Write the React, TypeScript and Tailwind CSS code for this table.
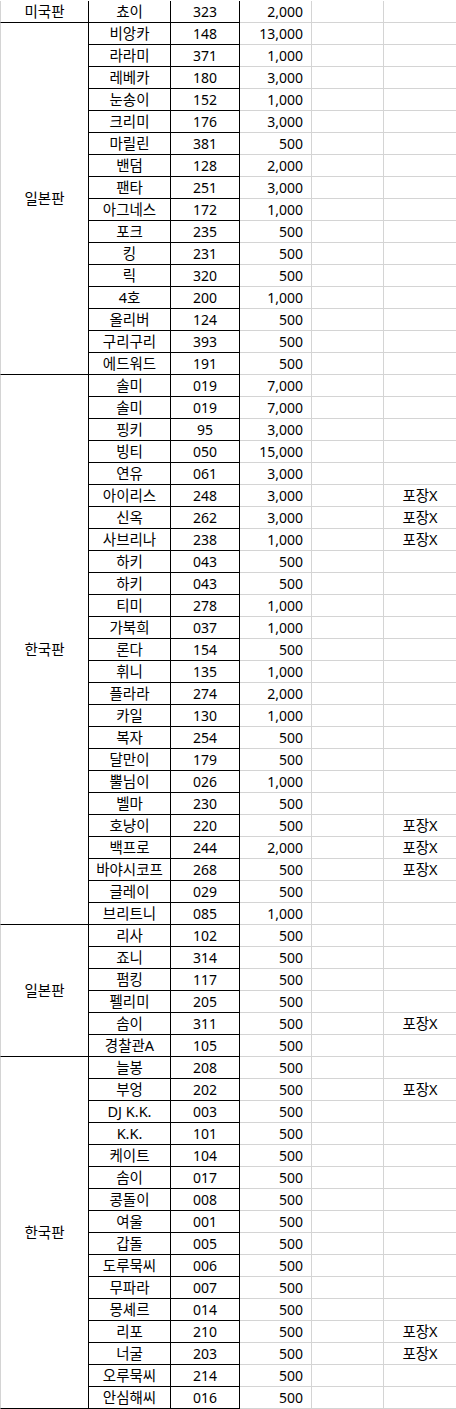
import React from 'react';

type Row = { name: string; no: string; price: string; note?: string };
type Group = { label: string; span: string; rows: Row[] };

const r = (name: string, no: string, price: string, note?: string): Row => ({ name, no, price, note });

const groups: Group[] = [
  { label: '미국판', span: 'row-span-1', rows: [r('쵸이', '323', '2,000')] },
  {
    label: '일본판',
    span: 'row-span-16',
    rows: [
      r('비앙카', '148', '13,000'),
      r('라라미', '371', '1,000'),
      r('레베카', '180', '3,000'),
      r('눈송이', '152', '1,000'),
      r('크리미', '176', '3,000'),
      r('마릴린', '381', '500'),
      r('밴덤', '128', '2,000'),
      r('팬타', '251', '3,000'),
      r('아그네스', '172', '1,000'),
      r('포크', '235', '500'),
      r('킹', '231', '500'),
      r('릭', '320', '500'),
      r('4호', '200', '1,000'),
      r('올리버', '124', '500'),
      r('구리구리', '393', '500'),
      r('에드워드', '191', '500'),
    ],
  },
  {
    label: '한국판',
    span: 'row-span-25',
    rows: [
      r('솔미', '019', '7,000'),
      r('솔미', '019', '7,000'),
      r('핑키', '95', '3,000'),
      r('빙티', '050', '15,000'),
      r('연유', '061', '3,000'),
      r('아이리스', '248', '3,000', '포장X'),
      r('신옥', '262', '3,000', '포장X'),
      r('사브리나', '238', '1,000', '포장X'),
      r('하키', '043', '500'),
      r('하키', '043', '500'),
      r('티미', '278', '1,000'),
      r('가북희', '037', '1,000'),
      r('론다', '154', '500'),
      r('휘니', '135', '1,000'),
      r('플라라', '274', '2,000'),
      r('카일', '130', '1,000'),
      r('복자', '254', '500'),
      r('달만이', '179', '500'),
      r('뿔님이', '026', '1,000'),
      r('벨마', '230', '500'),
      r('호냥이', '220', '500', '포장X'),
      r('백프로', '244', '2,000', '포장X'),
      r('바야시코프', '268', '500', '포장X'),
      r('글레이', '029', '500'),
      r('브리트니', '085', '1,000'),
    ],
  },
  {
    label: '일본판',
    span: 'row-span-6',
    rows: [
      r('리사', '102', '500'),
      r('죠니', '314', '500'),
      r('펌킹', '117', '500'),
      r('펠리미', '205', '500'),
      r('솜이', '311', '500', '포장X'),
      r('경찰관A', '105', '500'),
    ],
  },
  {
    label: '한국판',
    span: 'row-span-16',
    rows: [
      r('늘봉', '208', '500'),
      r('부엉', '202', '500', '포장X'),
      r('DJ K.K.', '003', '500'),
      r('K.K.', '101', '500'),
      r('케이트', '104', '500'),
      r('솜이', '017', '500'),
      r('콩돌이', '008', '500'),
      r('여울', '001', '500'),
      r('갑돌', '005', '500'),
      r('도루묵씨', '006', '500'),
      r('무파라', '007', '500'),
      r('몽셰르', '014', '500'),
      r('리포', '210', '500', '포장X'),
      r('너굴', '203', '500', '포장X'),
      r('오루묵씨', '214', '500'),
      r('안심해씨', '016', '500'),
    ],
  },
];

const cell = 'flex items-center whitespace-nowrap overflow-hidden';

export default function App() {
  return (
    <div
      className="w-[456px] h-[1409px] bg-white pt-px overflow-hidden text-[14px] leading-[21px] text-black"
      style={{ fontFamily: '"Noto Sans", "Noto Sans CJK KR", sans-serif' }}
    >
      <div className="grid grid-cols-[89px_82px_69px_72px_72px_72px] auto-rows-[22px]">
        {groups.map((g, gi) => (
          <React.Fragment key={gi}>
            {/* merged edition cell */}
            <div
              className={`${g.span} ${cell} justify-center text-[14.5px] border-l border-l-[#d4d4d4] border-r border-r-black border-b border-b-black`}
            >
              {g.label}
            </div>
            {g.rows.map((row, ri) => (
              <React.Fragment key={ri}>
                <div className={`col-start-2 ${cell} justify-center text-[14.5px] border-r border-b border-black`}>
                  {row.name}
                </div>
                <div className={`${cell} justify-center border-r border-b border-black`}>{row.no}</div>
                <div className={`${cell} justify-end pr-2 border-r border-r-[#d4d4d4] border-b border-b-[#d4d4d4]`}>
                  {row.price}
                </div>
                <div className={`${cell} border-r border-b border-[#d4d4d4]`} />
                <div className={`${cell} justify-center text-[14.5px] border-b border-[#d4d4d4]`}>{row.note}</div>
              </React.Fragment>
            ))}
          </React.Fragment>
        ))}
      </div>
    </div>
  );
}
